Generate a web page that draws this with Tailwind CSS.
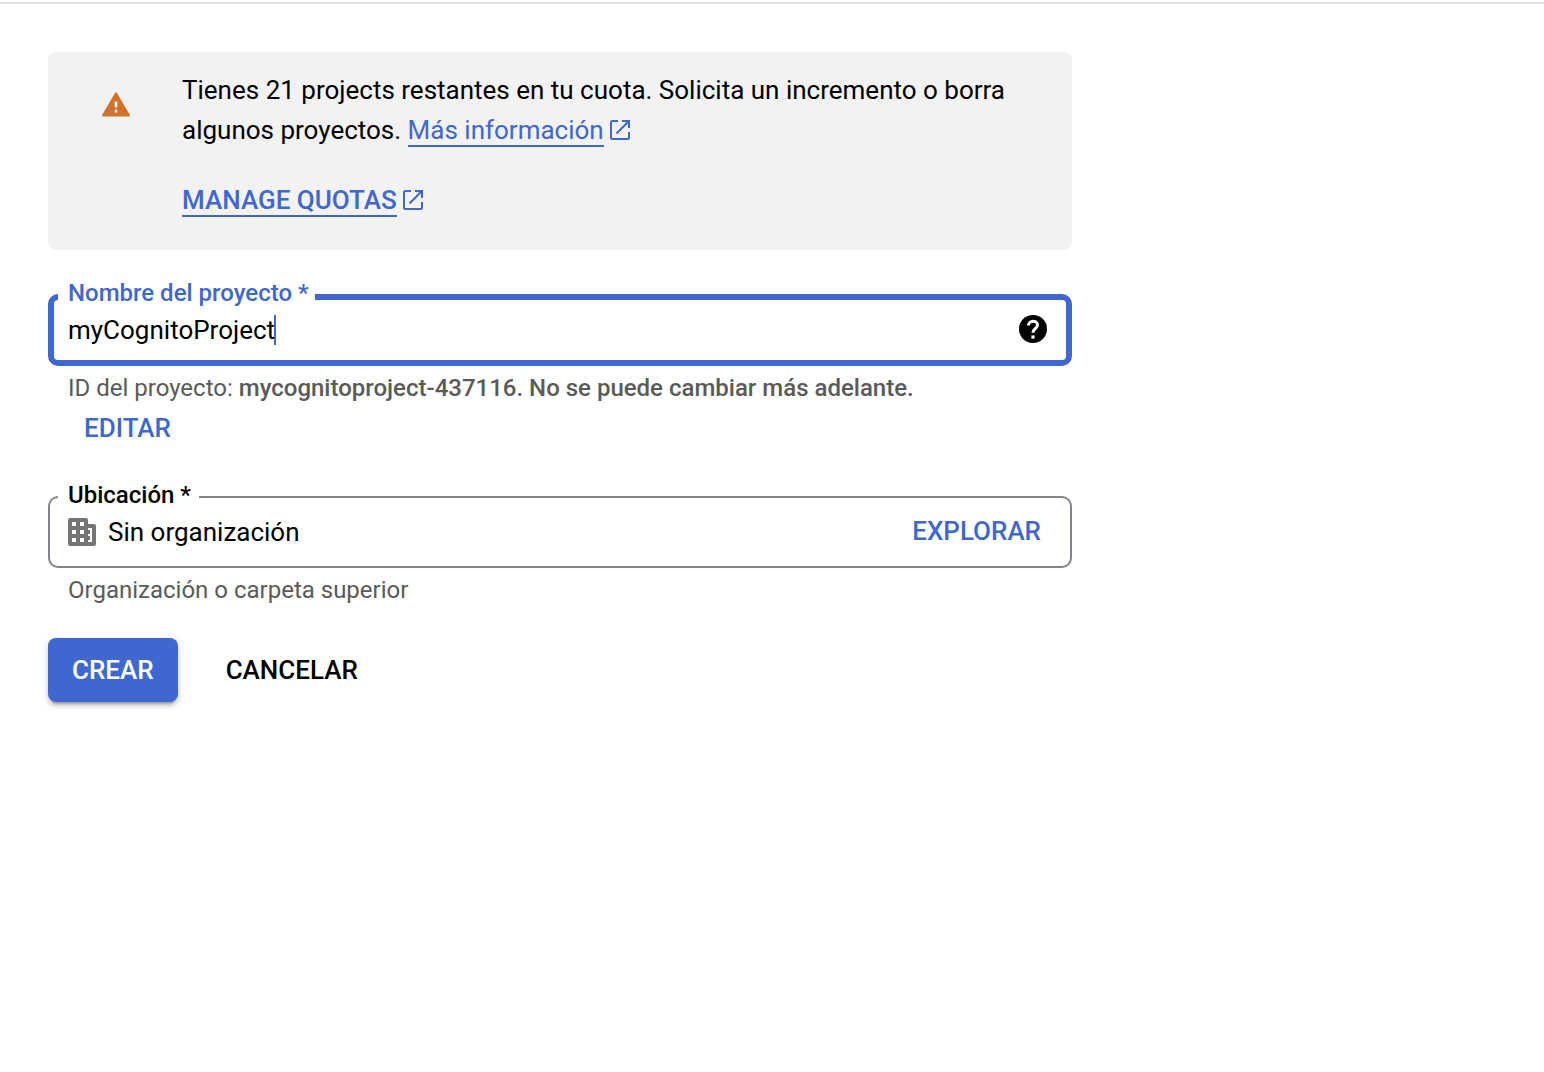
<!DOCTYPE html>
<html lang="es">
<head>
<meta charset="utf-8">
<meta name="viewport" content="width=device-width, initial-scale=1">
<title>Proyecto nuevo</title>
<script src="https://cdn.jsdelivr.net/npm/@tailwindcss/browser@4"></script>
</head>
<body class="min-h-screen bg-white pt-[2px] font-['Roboto',sans-serif] text-[26px] text-black">
<svg class="hidden" aria-hidden="true">
  <symbol id="open-in-new" viewBox="0 0 20 20">
    <path d="M8 1H2.500Q1 1 1 2.500V17.500Q1 19 2.500 19H17.500Q19 19 19 17.500V12M12 1H19V8M18.500 1.500L6.500 13.500" fill="none" stroke="currentColor" stroke-width="2"/>
  </symbol>
</svg>
<main class="border-t-2 border-[#e0e0e0] px-12 pt-12">
  <form class="max-w-[1024px]">
    <section class="flex rounded-lg bg-[#f2f2f2] pt-[18px] pr-12 pb-[30px]">
      <div class="flex w-[134px] shrink-0 justify-center pt-[22px] pl-[2px]">
        <svg class="h-[25px] w-7 text-[#d0722b]" viewBox="0 0 28 25" role="img" aria-label="Advertencia">
          <path d="M14 1.200L27 23.400H1Z" fill="currentColor" stroke="currentColor" stroke-width="2" stroke-linejoin="round"/>
          <path d="M12.700 9.500h2.600v6h-2.600zM12.700 17.500h2.600v3h-2.600z" fill="#f2f2f2"/>
        </svg>
      </div>
      <div class="leading-10">
        <p>Tienes 21 projects restantes en tu cuota. Solicita un incremento o borra algunos proyectos. <a href="#" class="text-[#4067d0]"><span class="border-b-2 border-[#4067d0]">Más información</span><svg class="ml-[6px] inline-block size-5 align-[-1px]" aria-hidden="true"><use href="#open-in-new"/></svg></a></p>
        <p class="mt-[30px]"><a href="#" class="font-medium text-[#4067d0]"><span class="border-b-2 border-[#4067d0]">MANAGE QUOTAS</span><svg class="ml-[6px] inline-block size-5 align-[-1px]" aria-hidden="true"><use href="#open-in-new"/></svg></a></p>
      </div>
    </section>

    <fieldset class="mt-[31px] rounded-[10px] border-6 border-[#4067d0] pr-[19px] pb-[13px] pl-1">
      <legend class="pr-[6px] pb-2 pl-[10px] text-[24px] leading-6 font-medium text-[#4067d0]"><label for="project-name">Nombre del proyecto *</label></legend>
      <div class="flex h-[34px] items-center pl-[10px]">
        <input id="project-name" type="text" value="myCognitoProject" class="field-sizing-content leading-8 outline-none">
        <span class="-ml-px h-[30px] w-[2px] bg-[#4067d0]"></span>
        <button type="button" class="ml-auto pb-[2px]" aria-label="Ayuda">
          <svg class="size-7" viewBox="0 0 28 28" aria-hidden="true">
            <circle cx="14" cy="14" r="14"/>
            <path d="M9.500 10.500C9.500 4.800 18.500 4.800 18.500 10.200C18.500 13.500 14 13.600 14 17.800" fill="none" stroke="#fff" stroke-width="3"/>
            <path d="M12.400 20.400h3.200v3.200h-3.200z" fill="#fff"/>
          </svg>
        </button>
      </div>
    </fieldset>
    <div class="mt-[6px] px-5 text-[#5a5a5a]">
      <p class="text-[24px] leading-8">ID del proyecto: <span class="font-medium">mycognitoproject-437116. No se puede cambiar más adelante.</span></p>
      <button type="button" class="mt-2 block px-4 leading-8 font-medium text-[#4067d0]">EDITAR</button>
    </div>

    <fieldset class="mt-[39px] rounded-[10px] border-2 border-[#80868b] pr-[29px] pb-[13px] pl-2">
      <legend class="pr-2 pb-1 pl-[10px] text-[24px] leading-6 font-medium"><label for="location">Ubicación *</label></legend>
      <div class="flex h-[42px] items-center gap-3 pl-[10px]">
        <svg class="size-7 shrink-0 text-[#757575]" viewBox="0 0 28 28" aria-hidden="true">
          <path fill="currentColor" fill-rule="evenodd" d="M2 0H18Q20 0 20 2V6H26Q28 6 28 8V26Q28 28 26 28H2Q0 28 0 26V2Q0 0 2 0ZM4 4V8H8V4ZM12 4V8H16V4ZM4 12V16H8V12ZM12 12V16H16V12ZM4 20V24H8V20ZM12 20V24H16V20ZM20 10V12H22V16H20V18H22V22H20V24H24V10Z"/>
        </svg>
        <input id="location" type="text" value="Sin organización" readonly class="min-w-0 flex-1 leading-8 outline-none">
        <button type="button" class="pb-[2px] leading-8 font-medium text-[#4067d0]">EXPLORAR</button>
      </div>
    </fieldset>
    <p class="mt-[6px] px-5 text-[24px] leading-8 text-[#5a5a5a]">Organización o carpeta superior</p>

    <div class="mt-8 flex gap-6">
      <button type="submit" class="h-16 rounded-lg bg-[#4067d0] px-6 font-medium text-white shadow-[0_6px_2px_-4px_rgba(0,0,0,0.2),0_4px_4px_0_rgba(0,0,0,0.14),0_2px_10px_0_rgba(0,0,0,0.12)]">CREAR</button>
      <button type="button" class="h-16 px-6 font-medium">CANCELAR</button>
    </div>
  </form>
</main>
</body>
</html>
